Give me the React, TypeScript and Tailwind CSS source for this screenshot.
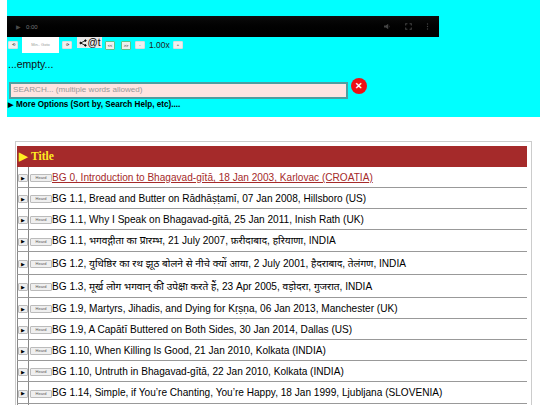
const rows = [
  { title: 'BG 0, Introduction to Bhagavad-gītā, 18 Jan 2003, Karlovac (CROATIA)', h: 'h-[21px]' },
  { title: 'BG 1.1, Bread and Butter on Rādhāṣṭamī, 07 Jan 2008, Hillsboro (US)', h: 'h-[21px]' },
  { title: 'BG 1.1, Why I Speak on Bhagavad-gītā, 25 Jan 2011, Inish Rath (UK)', h: 'h-[21px]' },
  { title: 'BG 1.1, भगवद्गीता का प्रारम्भ, 21 July 2007, फ़रीदाबाद, हरियाणा, INDIA', h: 'h-[22px]' },
  { title: 'BG 1.2, युधिष्ठिर का रथ झूठ बोलने से नीचे क्यों आया, 2 July 2001, हैदराबाद, तेलंगण, INDIA', h: 'h-[23px]' },
  { title: 'BG 1.3, मूर्ख लोग भगवान् की उपेक्षा करते हैं, 23 Apr 2005, वड़ोदरा, गुजरात, INDIA', h: 'h-[23px]' },
  { title: 'BG 1.9, Martyrs, Jihadis, and Dying for Kṛṣṇa, 06 Jan 2013, Manchester (UK)', h: 'h-[21px]' },
  { title: 'BG 1.9, A Capātī Buttered on Both Sides, 30 Jan 2014, Dallas (US)', h: 'h-[21px]' },
  { title: 'BG 1.10, When Killing Is Good, 21 Jan 2010, Kolkata (INDIA)', h: 'h-[21px]' },
  { title: 'BG 1.10, Untruth in Bhagavad-gītā, 22 Jan 2010, Kolkata (INDIA)', h: 'h-[21px]' },
  { title: 'BG 1.14, Simple, if You’re Chanting, You’re Happy, 18 Jan 1999, Ljubljana (SLOVENIA)', h: 'h-[22px]' },
];

function TinyButton({ children, green }: { children: React.ReactNode; green?: boolean }) {
  return (
    <span
      className={`flex items-center justify-center rounded-[1px] bg-[#efefef] text-[4px] leading-none text-black ${
        green ? 'h-[9px] w-[10px] border border-[#5fc28a]' : 'h-[8px] w-[10px] border border-[#ddd]'
      }`}
    >
      {children}
    </span>
  );
}

function Row({ title, h, first }: { title: string; h: string; first?: boolean }) {
  return (
    <div className={`flex border-b border-[#999] ${h}`}>
      <div className="flex w-[12px] shrink-0 items-center justify-center border-x border-[#888] pt-[2px]">
        <span className="flex h-[8px] w-[10px] items-center justify-center rounded-[1px] border border-[#bbb] bg-[#efefef] text-[5px] leading-none text-black">
          ▶
        </span>
      </div>
      <div className="flex min-w-0 flex-1 items-center pl-[1px] pt-[2px]">
        <span className="flex h-[8px] w-[22px] shrink-0 items-center justify-center rounded-[1px] border border-[#bbb] bg-[#efefef] text-[4px] leading-none text-[#555]">
          Heard
        </span>
        <span
          className={`whitespace-nowrap text-[10.1px] leading-none ${
            first ? 'text-[#a52a2a] underline' : 'text-black'
          }`}
        >
          {title}
        </span>
      </div>
    </div>
  );
}

export default function App() {
  return (
    <div className="h-[405px] w-[540px] overflow-hidden bg-white [font-family:'Liberation_Sans','Noto_Sans',sans-serif]">
      <div className="ml-[7px] h-[117px] bg-[#00ffff] pt-[16px]">
        <div className="flex h-[21px] w-[432px] items-center bg-gradient-to-b from-[#0d0d0d] to-black px-[9px] text-[#4a4a4a]">
          <span className="text-[6px] leading-none">▶</span>
          <span className="ml-[5px] text-[6px] leading-none text-[#777]">0:00</span>
          <div className="ml-auto flex items-center gap-[14px] pr-[1px]">
            <svg viewBox="0 0 10 10" className="h-[7px] w-[7px]" fill="#444">
              <path d="M0 3.5h2.5L6 1v8L2.5 6.500H0zM7 3q2 2 0 4z" />
            </svg>
            <svg viewBox="0 0 10 10" className="h-[7px] w-[7px]" fill="none" stroke="#444" strokeWidth="1.500">
              <path d="M1 3.500V1h2.500M6.500 1H9v2.500M9 6.500V9H6.500M3.500 9H1V6.500" />
            </svg>
            <svg viewBox="0 0 4 10" className="h-[7px] w-[3px]" fill="#444">
              <circle cx="2" cy="1.500" r="1" />
              <circle cx="2" cy="5" r="1" />
              <circle cx="2" cy="8.500" r="1" />
            </svg>
          </div>
        </div>
        <div className="flex h-[17px] items-start pl-[1px]">
          <span className="mt-[4px]"><TinyButton>⟲</TinyButton></span>
          <span className="ml-[4px] flex h-[16px] w-[37px] items-center justify-center bg-white text-[4px] leading-none text-[#999]">
            Min.. Goto
          </span>
          <span className="ml-[3px] mt-[4px]"><TinyButton>⟳</TinyButton></span>
          <span className="ml-[5px] flex h-[11px] w-[25px] items-center justify-center bg-[#e8e8e8] text-[10px] leading-none text-black">
            <svg viewBox="0 0 10 10" className="mr-[1px] h-[8px] w-[8px]" fill="#000" stroke="#000">
              <path d="M8 2 2 5l6 3" fill="none" strokeWidth="1" />
              <circle cx="8" cy="2" r="1" />
              <circle cx="2" cy="5" r="1" />
              <circle cx="8" cy="8" r="1" />
            </svg>
            @t
          </span>
          <span className="ml-[3px] mt-[4px]"><TinyButton green>&lt;&lt;</TinyButton></span>
          <span className="ml-[6px] mt-[4px]"><TinyButton green>&gt;&gt;</TinyButton></span>
          <span className="ml-[4px] mt-[4px]"><TinyButton>-</TinyButton></span>
          <span className="ml-[4px] mt-[2px] text-[8.5px] leading-[13px] text-[#222]">1.00x</span>
          <span className="ml-[3px] mt-[4px]"><TinyButton>+</TinyButton></span>
        </div>
        <p className="mt-[4px] h-[13px] pl-[1px] text-[10.5px] leading-[13px] text-[#111]">...empty...</p>
        <div className="mt-[11px] flex items-start pl-[2px]">
          <div className="flex h-[17px] w-[339px] items-center border-2 border-[#4f9ea0] bg-[#ffe4e1] pl-[2px] text-[8.1px] leading-none text-[#999]">
            SEARCH... (multiple words allowed)
          </div>
          <span className="-mt-[4px] ml-[3px] flex h-[16px] w-[16px] items-center justify-center rounded-full bg-[#ee0f14] text-[9px] font-bold leading-none text-white">
            ✕
          </span>
        </div>
        <p className="pl-[1px] text-[8.15px] font-bold leading-[11px] text-black">
          <span className="mr-[3px] text-[7px]">▶</span>More Options (Sort by, Search Help, etc)....
        </p>
      </div>
      <div className="ml-[15px] mt-[24px] h-[300px] w-[517px] border border-[#ccc] pl-[1px] pr-[4px] pt-[4px]">
        <div className="flex h-[21px] items-center bg-[#a52a2a] text-[11.5px] font-bold text-[#ffee22] [font-family:'Liberation_Serif',serif]">
          <span className="w-[14px] pl-[2px] text-[11px]">▶</span>
          <span>Title</span>
        </div>
        {rows.map((r, i) => (
          <Row key={r.title} title={r.title} h={r.h} first={i === 0} />
        ))}
        <div className="h-[10px] w-[12px] border-x border-[#888]" />
      </div>
    </div>
  );
}
